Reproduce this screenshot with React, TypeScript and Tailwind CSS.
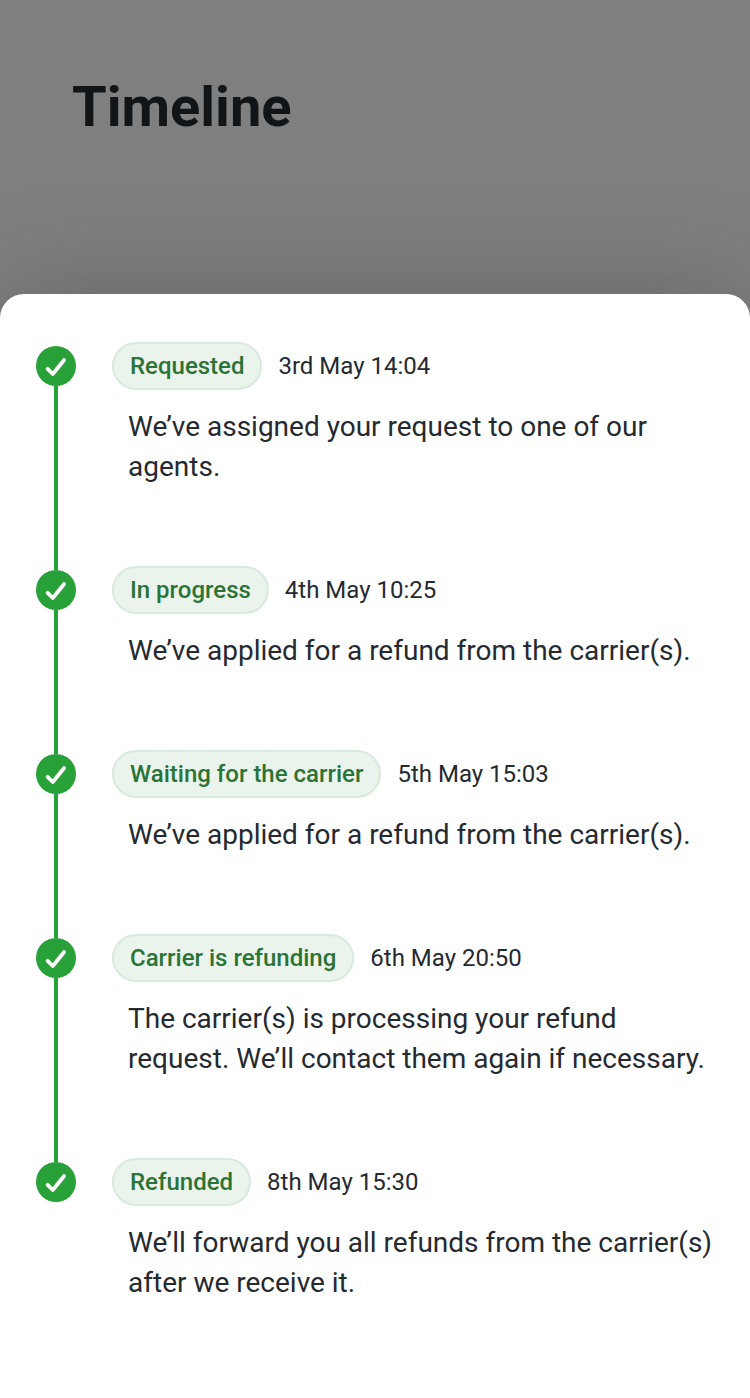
const steps = [
  { status: "Requested", date: "3rd May 14:04", text: "We’ve assigned your request to one of our agents." },
  { status: "In progress", date: "4th May 10:25", text: "We’ve applied for a refund from the carrier(s)." },
  { status: "Waiting for the carrier", date: "5th May 15:03", text: "We’ve applied for a refund from the carrier(s)." },
  { status: "Carrier is refunding", date: "6th May 20:50", text: "The carrier(s) is processing your refund request. We’ll contact them again if necessary." },
  { status: "Refunded", date: "8th May 15:30", text: "We’ll forward you all refunds from the carrier(s) after we receive it." },
];

function CheckBadge() {
  return (
    <svg viewBox="0 0 40 40" className="block size-10 shrink-0" aria-hidden="true">
      <circle cx="20" cy="20" r="20" fill="#28a138" />
      <path d="M11.6 22.8 L16.8 28 L28.1 14" fill="none" stroke="#fff" strokeWidth="3.8" strokeLinecap="round" strokeLinejoin="round" />
    </svg>
  );
}

export default function App() {
  return (
    <div className="flex min-h-screen flex-col bg-[#7f7f7f] font-['Roboto',sans-serif] text-[#252a31]">
      <header className="px-18 pt-18 pb-38">
        <h1 className="text-[56px] leading-[70px] font-bold text-[#121518]">Timeline</h1>
      </header>
      <main className="grow rounded-t-3xl bg-white px-9 pt-12 pb-4 shadow-[0_-8px_96px_rgba(37,42,49,0.25)]">
        <ol>
          {steps.map((step, i) => (
            <li key={step.status} className="flex gap-9">
              <div className="flex flex-col items-center">
                <div className={i === 0 ? "h-1" : "h-1 w-1 bg-[#28a138]"} />
                <CheckBadge />
                {i < steps.length - 1 && <div className="w-1 grow bg-[#28a138]" />}
              </div>
              <div className="min-w-0 grow pb-[79px]">
                <div className="flex items-center gap-4">
                  <span className="flex h-12 items-center rounded-full border-2 border-[#d7eadb] bg-[#ebf4ec] px-4 text-2xl font-medium text-[#2b7336]">
                    {step.status}
                  </span>
                  <time className="text-2xl">{step.date}</time>
                </div>
                <p className="mt-[17px] pl-4 text-[28px] leading-10">{step.text}</p>
              </div>
            </li>
          ))}
        </ol>
      </main>
    </div>
  );
}
